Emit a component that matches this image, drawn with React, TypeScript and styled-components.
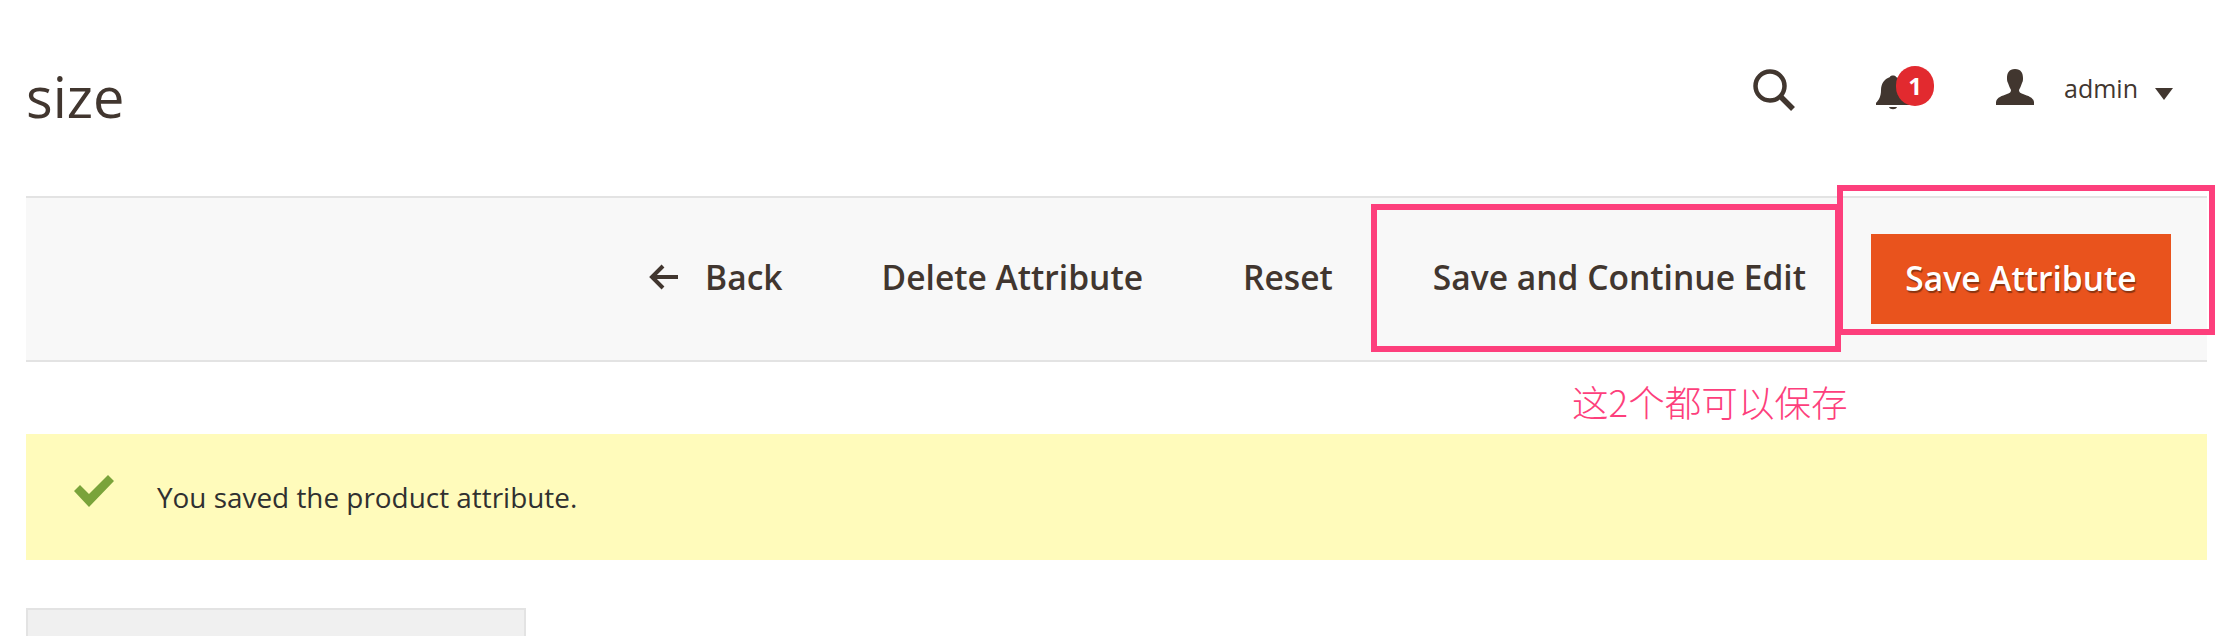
import styled, { createGlobalStyle } from "styled-components";

const GlobalStyle = createGlobalStyle`
  html, body {
    margin: 0;
    padding: 0;
    background: #ffffff;
    font-family: "Open Sans", "Noto Sans", sans-serif;
    color: #41362f;
  }
`;

const Page = styled.div`
  width: 2233px;
  height: 636px;
  overflow: hidden;
  box-sizing: border-box;
  padding: 0 26px;
`;

const Header = styled.header`
  display: flex;
  justify-content: space-between;
  align-items: flex-start;
  height: 196px;
`;

const Title = styled.h1`
  margin: 60px 0 0;
  font-size: 56px;
  line-height: 72px;
  font-weight: 400;
`;

const Actions = styled.div`
  display: flex;
  align-items: flex-start;
  padding: 66px 34px 0 0;
`;

const SearchIcon = styled.svg`
  width: 42px;
  height: 42px;
  margin-top: 3px;
  margin-right: 80px;
`;

const Bell = styled.div`
  position: relative;
  width: 59px;
  height: 42px;
  margin-right: 62px;
`;

const BellIcon = styled.svg`
  position: absolute;
  left: 0;
  top: 8px;
  width: 36px;
  height: 36px;
`;

const Badge = styled.span`
  position: absolute;
  left: 21px;
  top: 0;
  width: 38px;
  height: 40px;
  border-radius: 19px;
  background: #e22a2f;
  color: #ffffff;
  font-size: 24px;
  font-weight: 700;
  line-height: 40px;
  text-align: center;
`;

const UserIcon = styled.svg`
  width: 38px;
  height: 36px;
  margin-top: 3px;
  margin-right: 30px;
`;

const UserName = styled.span`
  font-size: 25px;
  line-height: 36px;
  margin-top: 4px;
  margin-right: 17px;
`;

const Caret = styled.span`
  width: 0;
  height: 0;
  margin-top: 22px;
  border-left: 9px solid transparent;
  border-right: 9px solid transparent;
  border-top: 12px solid #41362f;
`;

const Toolbar = styled.div`
  position: relative;
  display: flex;
  justify-content: flex-end;
  align-items: center;
  height: 162px;
  padding-right: 36px;
  background: #f8f8f8;
  border-top: 2px solid #e3e3e3;
  border-bottom: 2px solid #e3e3e3;
`;

const ActionLink = styled.a`
  display: flex;
  align-items: center;
  margin-top: -4px;
  margin-right: ${({ $gap }: { $gap: number }) => $gap}px;
  font-size: 33.6px;
  font-weight: 600;
  color: #41362f;
`;

const BackArrow = styled.svg`
  width: 30px;
  height: 26px;
  margin-right: 26px;
`;

const PrimaryButton = styled.button`
  width: 300px;
  height: 90px;
  padding: 0 0 3px;
  border: 0;
  background: #e9531d;
  color: #ffffff;
  font-family: inherit;
  font-size: 33.6px;
  font-weight: 600;
  text-shadow: 1px 2px 1px #8a3410;
`;

const Highlight = styled.div`
  position: absolute;
  box-sizing: border-box;
  border: 6px solid #fd3f7c;
  left: ${({ $left }: { $left: number; $top: number; $w: number; $h: number }) => $left}px;
  top: ${({ $top }) => $top}px;
  width: ${({ $w }) => $w}px;
  height: ${({ $h }) => $h}px;
`;

const NoteRow = styled.div`
  display: flex;
  align-items: center;
  height: 72px;
  padding-left: 1546px;
`;

const Note = styled.span`
  margin-top: 8px;
  font-family: "Noto Sans CJK SC", "Open Sans", sans-serif;
  font-size: 36.6px;
  font-weight: 300;
  line-height: 50px;
  color: #fd3f7c;
`;

const Message = styled.div`
  display: flex;
  align-items: center;
  height: 126px;
  padding-left: 48px;
  background: #fffbbb;
  color: #303030;
  font-size: 27.9px;
`;

const CheckIcon = styled.svg`
  width: 40px;
  height: 32px;
  margin-right: 43px;
  margin-top: -12px;
`;

const Tabs = styled.div`
  box-sizing: border-box;
  width: 500px;
  height: 60px;
  margin-top: 48px;
  background: #f0f0f0;
  border: 2px solid #e3e3e3;
`;

export default function App() {
  return (
    <Page>
      <GlobalStyle />
      <Header>
        <Title>size</Title>
        <Actions>
          <SearchIcon viewBox="0 0 42 42" fill="none" stroke="#41362f">
            <circle cx="17" cy="17" r="14.5" strokeWidth="4.5" />
            <path d="M27.5 27.5L40 40" strokeWidth="5.5" />
          </SearchIcon>
          <Bell>
            <BellIcon viewBox="0 0 36 36" fill="#41362f">
              <path d="M15 3c0-2 6-2 6 0 6 2 9 7 9 13 0 6 2 10 5 13v2H1v-2c3-3 5-7 5-13 0-6 3-11 9-13z" />
              <path d="M14 33h8c-1 3-7 3-8 0z" />
            </BellIcon>
            <Badge>1</Badge>
          </Bell>
          <UserIcon viewBox="0 0 38 36" fill="#41362f">
            <path d="M19 0c6 0 8 4 8 9 0 2 0 3-1 5-1 3-2 5-3 7 0 2 1 3 4 4 5 2 10 3 11 8v3H0v-3c1-5 6-6 11-8 3-1 4-2 4-4-1-2-2-4-3-7-1-2-1-3-1-5 0-5 2-9 8-9z" />
          </UserIcon>
          <UserName>admin</UserName>
          <Caret />
        </Actions>
      </Header>
      <Toolbar>
        <ActionLink $gap={99}>
          <BackArrow viewBox="0 0 30 26" fill="none" stroke="#41362f" strokeWidth="4">
            <path d="M29 13H4M14 2L3 13l11 11" />
          </BackArrow>
          Back
        </ActionLink>
        <ActionLink $gap={100}>Delete Attribute</ActionLink>
        <ActionLink $gap={100}>Reset</ActionLink>
        <ActionLink $gap={65}>Save and Continue Edit</ActionLink>
        <PrimaryButton>Save Attribute</PrimaryButton>
        <Highlight $left={1345} $top={6} $w={470} $h={148} />
        <Highlight $left={1811} $top={-13} $w={378} $h={150} />
      </Toolbar>
      <NoteRow>
        <Note>这2个都可以保存</Note>
      </NoteRow>
      <Message>
        <CheckIcon viewBox="0 0 40 32" fill="#7aa33a">
          <path d="M0 16l6-6 9 9L34 0l6 6-25 26z" />
        </CheckIcon>
        You saved the product attribute.
      </Message>
      <Tabs />
    </Page>
  );
}
